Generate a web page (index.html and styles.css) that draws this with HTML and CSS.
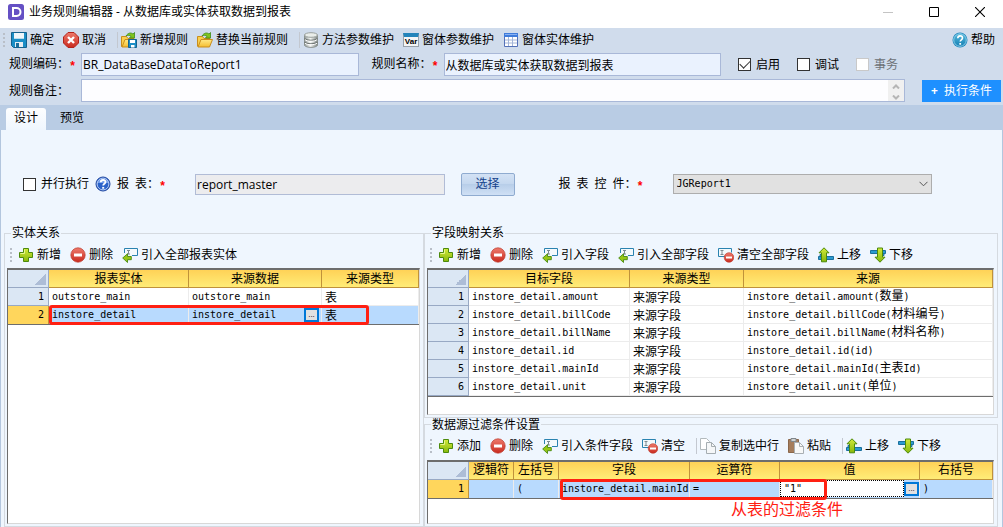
FILE: index.html
```html
<!DOCTYPE html>
<html lang="zh-CN">
<head>
<meta charset="utf-8">
<title>业务规则编辑器</title>
<link rel="stylesheet" href="styles.css">
</head>
<body>
<svg class="defs" width="0" height="0" aria-hidden="true">
  <defs>
    <linearGradient id="gGreen" x1="0" y1="0" x2="0" y2="1"><stop offset="0" stop-color="#d3ea3a"/><stop offset="1" stop-color="#86b80c"/></linearGradient>
    <linearGradient id="gRed" x1="0" y1="0" x2="0" y2="1"><stop offset="0" stop-color="#ee7a6c"/><stop offset="1" stop-color="#c92a1e"/></linearGradient>
    <linearGradient id="gFolder" x1="0" y1="0" x2="0" y2="1"><stop offset="0" stop-color="#ffe987"/><stop offset="1" stop-color="#f5bd2e"/></linearGradient>
    <linearGradient id="gSilver" x1="0" y1="0" x2="1" y2="0"><stop offset="0" stop-color="#8e9694"/><stop offset=".45" stop-color="#f6f8f6"/><stop offset="1" stop-color="#7c8482"/></linearGradient>
    <linearGradient id="gBlue" x1="0" y1="0" x2="0" y2="1"><stop offset="0" stop-color="#55b9dc"/><stop offset="1" stop-color="#1580b4"/></linearGradient>
  </defs>
  <symbol id="i-save" viewBox="0 0 16 16"><path d="M.5.5h15v15H2.500l-2-2z" fill="#1b8ec6" stroke="#14628f"/><path d="M3 1h10v6H3z" fill="#eef6fa"/><path d="M3 6h10v1H3z" fill="#b7dcee"/><path d="M4 10h8v5H4z" fill="#e8eef2"/><path d="M5 11h3v4H5z" fill="#1c6e9c"/></symbol>
  <symbol id="i-cancel" viewBox="0 0 16 16"><path d="M5 .5h6L15.500 5v6L11 15.500H5L.5 11V5z" fill="url(#gRed)" stroke="#b3231a"/><path d="M5 5l6 6M11 5l-6 6" stroke="#fff" stroke-width="2.400"/></symbol>
  <symbol id="i-folder" viewBox="0 0 16 16"><path d="M.5 14.500V4.500h5l1.500 2h6v3" fill="#f9cf4c" stroke="#c98d1c"/><path d="M1 15l3-7.500h11.500L12.500 15z" fill="url(#gFolder)" stroke="#c98d1c"/><path d="M5 4C7 .7 10 .3 12 2l1.500-1.500V6H8.500L10 4.300C8.500 3 7 3.200 5 4z" fill="#80c41f" stroke="#3d8b17" stroke-width=".8"/></symbol>
  <symbol id="i-foldersave" viewBox="0 0 16 16"><path d="M.5 14.500V4.500h5l1.500 2h6v8z" fill="#f9cf4c" stroke="#c98d1c"/><path d="M1 15l3-7.500h10V15z" fill="url(#gFolder)" stroke="#c98d1c"/><path d="M5 4C7 .7 10 .3 12 2l1.500-1.500V6H8.500L10 4.300C8.500 3 7 3.200 5 4z" fill="#80c41f" stroke="#3d8b17" stroke-width=".8"/><path d="M7.500 7.500h8v8h-8z" fill="#1b8ec6" stroke="#14628f"/><path d="M9 8h5v3H9zM10 13h3.500v2.500H10z" fill="#fff"/></symbol>
  <symbol id="i-db" viewBox="0 0 16 16"><path d="M1.500 3h13v10.500c-2 2.500-11 2.500-13 0z" fill="url(#gSilver)" stroke="#8b928f"/><ellipse cx="8" cy="3" rx="6.500" ry="2.300" fill="#e9edea" stroke="#9aa19e"/><path d="M1.500 6.500c2 2.300 11 2.300 13 0M1.500 10c2 2.300 11 2.300 13 0" fill="none" stroke="#6f7674" stroke-width="1.200"/><path d="M2 7.600c2 2.200 10 2.200 12 0M2 11.100c2 2.200 10 2.200 12 0" fill="none" stroke="#fff"/></symbol>
  <symbol id="i-table" viewBox="0 0 16 16"><path d="M1.500 1.500h13v13h-13z" fill="#fff" stroke="#5471b8"/><path d="M1 1h14v4H1z" fill="#3e7bdb"/><path d="M2 2h12v1H2z" fill="#88b1f2"/><path d="M5.500 5v9M9.500 5v9M2 8h12M2 11h12" stroke="#a3b5d8"/></symbol>
  <symbol id="i-help" viewBox="0 0 16 16"><circle cx="8" cy="8" r="7.500" fill="#1b86bd"/><circle cx="8" cy="8" r="6.300" fill="url(#gBlue)" stroke="#a4dcf0" stroke-width=".8"/><path d="M5.800 6.200C5.800 3 10.500 3.200 10.500 6c0 1.800-2.300 1.800-2.300 3.600" fill="none" stroke="#fff" stroke-width="1.600"/><path d="M7.300 11h1.800v1.700H7.300z" fill="#fff"/></symbol>
  <symbol id="i-helpblue" viewBox="0 0 16 16"><circle cx="8" cy="8" r="7" fill="#2b62c9" stroke="#1d449d"/><path d="M2.200 7a5.900 5 0 0 1 11.600 0z" fill="#6f9cec"/><circle cx="8" cy="8" r="5.900" fill="none" stroke="#b5cdf5"/><path d="M5.700 6.300C5.800 3.300 10.500 3.300 10.500 6c0 1.800-2.300 1.800-2.300 3.500" fill="none" stroke="#fff" stroke-width="1.800"/><path d="M7.200 10.900h2v1.800h-2z" fill="#fff"/></symbol>
  <symbol id="i-add" viewBox="0 0 16 16"><path d="M5.500 1.500h5v4h4v5h-4v4h-5v-4h-4v-5h4z" fill="url(#gGreen)" stroke="#4c8a0c"/><path d="M6.500 2.500v4h-4" fill="none" stroke="#e8f78e"/></symbol>
  <symbol id="i-del" viewBox="0 0 16 16"><circle cx="8" cy="8" r="7.200" fill="url(#gRed)" stroke="#bb3a2d" stroke-width=".7"/><path d="M4 6.500h8v3H4z" fill="#fff"/></symbol>
  <symbol id="i-import" viewBox="0 0 16 16"><path d="M2.500 6V1.500h13v7H10" fill="#f3f9fc" stroke="#2a83b0"/><path d="M5 3.500h3M6.500 3.500v3.500M5 7h3" stroke="#7d8b91"/><path d="M.7 11L5.500 6.800v2.700h3.800v3.200H5.500v2.800z" fill="#97c714" stroke="#4a8a12" stroke-width=".9"/></symbol>
  <symbol id="i-clear" viewBox="0 0 16 16"><path d="M7 9.500H.5v-8h13v4" fill="#f3f9fc" stroke="#2a83b0"/><path d="M2.500 3.500h3M4 3.500v4M2.500 7.500h3" stroke="#7d8b91"/><circle cx="11" cy="10.500" r="4.800" fill="url(#gRed)" stroke="#bb3a2d" stroke-width=".6"/><path d="M8 9.500h6v2H8z" fill="#fff"/></symbol>
  <symbol id="i-up" viewBox="0 0 16 16"><path d="M.5 9.500h15v3H.5zM2 7.500h4v2H2z" fill="#2b9bd0" stroke="#1a6f9d"/><path d="M6 .8l5 5H8.500v9h-5v-9H1z" fill="url(#gGreen)" stroke="#4c8a0c"/></symbol>
  <symbol id="i-down" viewBox="0 0 16 16"><path d="M.5 3.500h15v3H.5zM10 6.500h4v2h-4z" fill="#2b9bd0" stroke="#1a6f9d"/><path d="M10 15.200l-5-5h2.500V1h5v9.200H15z" fill="url(#gGreen)" stroke="#4c8a0c"/></symbol>
  <symbol id="i-copy" viewBox="0 0 16 16"><path d="M.5.5h6l3 3v8h-9z" fill="#fff" stroke="#b3babd"/><path d="M6.500 4.500h5l4 4v7h-9z" fill="#f5f7f8" stroke="#a5adb1"/><path d="M11.500 4.500v4h4" fill="none" stroke="#a5adb1"/></symbol>
  <symbol id="i-paste" viewBox="0 0 16 16"><path d="M.5 1.500h10v13H.5z" fill="#a57d5c" stroke="#8a674b"/><path d="M3 .5h5v3H3z" fill="#cfd3d5" stroke="#80868a"/><path d="M6.500 4.500h5l4 4v7h-9z" fill="#f7f8f8" stroke="#a8afb3"/><path d="M11.500 4.500v4h4" fill="none" stroke="#a8afb3"/></symbol>
</svg>

<header class="titlebar">
  <svg class="logo" viewBox="0 0 16 16" aria-hidden="true"><rect width="16" height="16" rx="2.500" fill="#6550c4"/><path d="M5 4h3.500a4 4 0 0 1 0 8H5z" fill="none" stroke="#fff" stroke-width="2"/></svg>
  <h1 class="title">业务规则编辑器 - 从数据库或实体获取数据到报表</h1>
  <div class="winbtns">
    <button class="winbtn" aria-label="最小化"><svg viewBox="0 0 10 10"><path d="M0 5.500h10" stroke="#c4c4c4"/></svg></button>
    <button class="winbtn" aria-label="最大化"><svg viewBox="0 0 10 10"><path d="M.5.5h9v9h-9z" fill="none" stroke="#000"/></svg></button>
    <button class="winbtn" aria-label="关闭"><svg viewBox="0 0 10 10"><path d="M0 0l10 10M10 0L0 10" stroke="#000" stroke-width="1.100"/></svg></button>
  </div>
</header>

<div class="top">
  <div class="toolbar main-toolbar">
    <span class="grip"></span>
    <button class="tool"><svg><use href="#i-save"/></svg>确定</button>
    <button class="tool"><svg><use href="#i-cancel"/></svg>取消</button>
    <span class="sep"></span>
    <button class="tool"><svg><use href="#i-foldersave"/></svg>新增规则</button>
    <button class="tool"><svg><use href="#i-folder"/></svg>替换当前规则</button>
    <span class="sep"></span>
    <button class="tool"><svg><use href="#i-db"/></svg>方法参数维护</button>
    <button class="tool"><span class="var-icon">Var</span>窗体参数维护</button>
    <button class="tool"><svg><use href="#i-table"/></svg>窗体实体维护</button>
    <button class="tool help"><svg><use href="#i-help"/></svg>帮助</button>
  </div>
  <div class="form-row">
    <label class="field-label" for="code">规则编码：<i class="req">*</i></label>
    <input class="text" id="code" value="BR_DataBaseDataToReport1">
    <label class="field-label second" for="name">规则名称：<i class="req">*</i></label>
    <input class="text" id="name" value="从数据库或实体获取数据到报表">
    <div class="checks">
      <label class="check"><input type="checkbox" checked>启用</label>
      <label class="check"><input type="checkbox">调试</label>
      <label class="check off"><input type="checkbox" disabled>事务</label>
    </div>
  </div>
  <div class="form-row">
    <label class="field-label" for="remark">规则备注：</label>
    <div class="remark">
      <textarea id="remark" rows="1"></textarea>
      <span class="spin"><svg viewBox="0 0 8 5"><path d="M1 4.500l3-3 3 3"/></svg><svg viewBox="0 0 8 5"><path d="M1 .5l3 3 3-3"/></svg></span>
    </div>
    <button class="cond"><span class="plus">+</span>执行条件</button>
  </div>
</div>

<nav class="tabs">
  <button class="tab active">设计</button>
  <button class="tab">预览</button>
</nav>

<main class="page">
  <div class="report-row">
    <label class="check"><input type="checkbox">并行执行</label>
    <svg class="tip"><use href="#i-helpblue"/></svg>
    <label class="report-label" for="report">报&ensp;表：<i class="req">*</i></label>
    <input class="text readonly" id="report" value="report_master" readonly>
    <button class="choose">选择</button>
    <label class="control-label" for="control">报&ensp;表&ensp;控&ensp;件：<i class="req">*</i></label>
    <div class="select-wrap">
      <select id="control"><option>JGReport1</option></select>
      <svg viewBox="0 0 9 6"><path d="M.5.8l4 4 4-4"/></svg>
    </div>
  </div>

  <div class="panels">
    <fieldset class="group entities">
      <legend>实体关系</legend>
      <div class="toolbar">
        <span class="grip"></span>
        <button class="tool"><svg><use href="#i-add"/></svg>新增</button>
        <button class="tool"><svg><use href="#i-del"/></svg>删除</button>
        <button class="tool"><svg><use href="#i-import"/></svg>引入全部报表实体</button>
      </div>
      <div class="grid">
        <table>
          <colgroup><col class="c-num"><col class="c-ent"><col class="c-src"><col></colgroup>
          <thead><tr><th class="corner"></th><th>报表实体</th><th>来源数据</th><th>来源类型</th></tr></thead>
          <tbody>
            <tr><td class="num">1</td><td>outstore_main</td><td>outstore_main</td><td class="cjk">表</td></tr>
            <tr class="sel"><td class="num">2</td><td>instore_detail</td><td><div class="edit">instore_detail<button class="more">...</button></div></td><td class="cjk">表</td></tr>
          </tbody>
        </table>
        <div class="mark mark-entity"></div>
      </div>
    </fieldset>

    <div class="right">
      <fieldset class="group mapping">
        <legend>字段映射关系</legend>
        <div class="toolbar">
          <span class="grip"></span>
          <button class="tool"><svg><use href="#i-add"/></svg>新增</button>
          <button class="tool"><svg><use href="#i-del"/></svg>删除</button>
          <button class="tool"><svg><use href="#i-import"/></svg>引入字段</button>
          <button class="tool"><svg><use href="#i-import"/></svg>引入全部字段</button>
          <button class="tool"><svg><use href="#i-clear"/></svg>清空全部字段</button>
          <button class="tool"><svg><use href="#i-up"/></svg>上移</button>
          <button class="tool"><svg><use href="#i-down"/></svg>下移</button>
        </div>
        <div class="grid">
          <table>
            <colgroup><col class="c-num"><col class="c-target"><col class="c-type"><col></colgroup>
            <thead><tr><th class="corner"></th><th>目标字段</th><th>来源类型</th><th>来源</th></tr></thead>
            <tbody>
              <tr><td class="num">1</td><td>instore_detail.amount</td><td class="cjk">来源字段</td><td>instore_detail.amount(<span class="cjk">数量</span>)</td></tr>
              <tr><td class="num">2</td><td>instore_detail.billCode</td><td class="cjk">来源字段</td><td>instore_detail.billCode(<span class="cjk">材料编号</span>)</td></tr>
              <tr><td class="num">3</td><td>instore_detail.billName</td><td class="cjk">来源字段</td><td>instore_detail.billName(<span class="cjk">材料名称</span>)</td></tr>
              <tr><td class="num">4</td><td>instore_detail.id</td><td class="cjk">来源字段</td><td>instore_detail.id(id)</td></tr>
              <tr><td class="num">5</td><td>instore_detail.mainId</td><td class="cjk">来源字段</td><td>instore_detail.mainId(<span class="cjk">主表</span>Id)</td></tr>
              <tr><td class="num">6</td><td>instore_detail.unit</td><td class="cjk">来源字段</td><td>instore_detail.unit(<span class="cjk">单位</span>)</td></tr>
            </tbody>
          </table>
        </div>
      </fieldset>

      <fieldset class="group filter">
        <legend>数据源过滤条件设置</legend>
        <div class="toolbar">
          <span class="grip"></span>
          <button class="tool"><svg><use href="#i-add"/></svg>添加</button>
          <button class="tool"><svg><use href="#i-del"/></svg>删除</button>
          <button class="tool"><svg><use href="#i-import"/></svg>引入条件字段</button>
          <button class="tool"><svg><use href="#i-clear"/></svg>清空</button>
          <span class="sep"></span>
          <button class="tool"><svg><use href="#i-copy"/></svg>复制选中行</button>
          <button class="tool"><svg><use href="#i-paste"/></svg>粘贴</button>
          <span class="sep"></span>
          <button class="tool"><svg><use href="#i-up"/></svg>上移</button>
          <button class="tool"><svg><use href="#i-down"/></svg>下移</button>
        </div>
        <div class="grid">
          <table>
            <colgroup><col class="c-num"><col class="c-brk"><col class="c-brk"><col class="c-field"><col class="c-op"><col class="c-val"><col></colgroup>
            <thead><tr><th class="corner"></th><th>逻辑符</th><th>左括号</th><th>字段</th><th>运算符</th><th>值</th><th>右括号</th></tr></thead>
            <tbody>
              <tr class="sel"><td class="num">1</td><td></td><td>(</td><td>instore_detail.mainId</td><td>=</td><td class="val"><div class="edit"><input class="cell-input" value='"1"' aria-label="值"><button class="more">...</button></div></td><td>)</td></tr>
            </tbody>
          </table>
          <div class="mark mark-filter"></div>
          <div class="note">从表的过滤条件</div>
        </div>
      </fieldset>
    </div>
  </div>
</main>
</body>
</html>
```
FILE: styles.css
```css
* { box-sizing: border-box; }

body {
  margin: 0;
  height: 100vh;
  display: flex;
  flex-direction: column;
  overflow: hidden;
  background: #d0dcec;
  color: #000;
  font: 12px/16px "Open Sans", "Noto Sans CJK SC", sans-serif;
}

button, input, textarea, select {
  font: inherit;
  color: inherit;
  margin: 0;
}

button { border: 0; padding: 0; background: none; white-space: nowrap; }

.defs { position: absolute; }

/* title bar */
.titlebar {
  display: flex;
  align-items: center;
  height: 28px;
  padding: 0 18px 4px 8px;
  background: #fff;
}
.logo { width: 16px; height: 16px; }
.title { margin: 0 0 0 5px; font-size: 12px; font-weight: 400; }
.winbtns { display: flex; gap: 36px; margin-left: auto; }
.winbtn { width: 10px; height: 10px; }
.winbtn svg { display: block; width: 10px; height: 10px; }

/* toolbars */
.toolbar { display: flex; align-items: center; height: 24px; padding-left: 3px; }
.main-toolbar { padding: 0 8px 0 3px; }
.grip {
  width: 2px;
  height: 14px;
  margin-right: 6px;
  background: repeating-linear-gradient(#b9bfc8 0 2px, transparent 2px 4px);
}
.tool { display: flex; align-items: center; gap: 3px; line-height: 16px; }
.tool + .tool { margin-left: 9px; }
.tool svg, .tip { width: 16px; height: 16px; flex: none; }
.tool.help { margin-left: auto; }
.sep { width: 1px; height: 16px; margin: 0 3px 0 11px; background: #fff; border-left: 1px solid #c3c8d0; }
.var-icon {
  width: 16px;
  height: 14px;
  border: 1px solid #98a2ac;
  border-top: 4px solid #2384bb;
  background: #f4f5f6;
  font: bold 8px/9px "Liberation Sans", sans-serif;
}

/* rule form */
.form-row { display: flex; align-items: center; margin: 0 2px 3px 9px; }
.main-toolbar + .form-row { margin-top: 1px; }
.field-label { width: 72px; flex: none; white-space: nowrap; }
.field-label.second { margin-left: 13px; }
.req { color: #f00; font: bold 12px/12px "Liberation Mono", monospace; vertical-align: -2px; }
.text {
  flex: 1;
  min-width: 0;
  height: 23px;
  padding: 0 1px;
  border: 1px solid #a9b8d8;
  background: #eaf2fe;
}
.checks { display: flex; gap: 17px; width: 280px; padding-left: 17px; }
.check { display: flex; align-items: center; gap: 5px; white-space: nowrap; }
.check input {
  appearance: none;
  width: 13px;
  height: 13px;
  border: 1px solid #333;
  background: #fff;
  display: grid;
  place-items: center;
}
.check input:checked::after {
  content: "";
  width: 9px;
  height: 5px;
  margin-bottom: 3px;
  border: solid #333;
  border-width: 0 0 1px 1px;
  transform: rotate(-45deg);
}
.check.off { color: #6d7177; }
.check.off input { border-color: #c9c9c9; }
.remark {
  flex: 1;
  display: flex;
  height: 23px;
  border: 1px solid #a9b8d8;
  background: #fdfdff;
}
.remark textarea { flex: 1; border: 0; padding: 2px; resize: none; background: none; overflow: hidden; }
.spin { display: flex; flex-direction: column; justify-content: space-between; align-items: center; width: 16px; padding: 4px 0 1px; background: #f0f0f0; }
.spin svg { width: 8px; height: 5px; }
.spin path { fill: none; stroke: #b5b5b5; stroke-width: 2; }
.cond { width: 79px; height: 22px; margin-left: 17px; background: #1e90ff; color: #fff; }
.plus { margin-right: 6px; font-weight: 700; }

/* tabs */
.tabs { display: flex; height: 25px; padding: 3px 6px 0; background: #b9cce4; }
.tab { width: 40px; height: 22px; padding-bottom: 2px; }
.tab + .tab { margin-left: 6px; }
.tab.active { background: linear-gradient(#fdfeff, #eff6fe); border-radius: 3px 3px 0 0; }

/* design page */
.page {
  flex: 1;
  min-height: 0;
  display: flex;
  flex-direction: column;
  background: #eff6fe;
  border: solid #b3c6de;
  border-width: 0 1px;
}
.report-row { display: flex; align-items: center; margin: 42px 70px 30px 22px; height: 24px; }
.tip { margin: 0 6px; }
.report-label { width: 78px; flex: none; }
.report-row .text.readonly { flex: 247 1 0; height: 21px; background: #ececee; border-color: #b1bcd6; }
.choose {
  width: 54px;
  height: 23px;
  margin-left: 16px;
  border: 1px solid #8fabd0;
  border-radius: 2px;
  background: linear-gradient(#d3e2f5, #c5d8ef 45%, #b8cee9 50%, #cfe0f5);
  color: #15428b;
}
.control-label { width: 114px; margin-left: 44px; flex: none; }
.select-wrap { position: relative; flex: 261 1 0; min-width: 0; }
.select-wrap select {
  display: block;
  appearance: none;
  width: 100%;
  height: 20px;
  padding: 0 3px;
  border: 1px solid #adadad;
  border-radius: 0;
  background: #e1e1e1;
  font: 10px/16px "DejaVu Sans Mono", monospace;
}
.select-wrap svg { position: absolute; right: 4px; top: 7px; width: 9px; height: 6px; }
.select-wrap path { fill: none; stroke: #555; }

/* group boxes */
.panels { flex: 1; min-height: 0; display: grid; grid-template-columns: 420fr 574fr; padding: 0 4px 0 3px; }
.right { display: flex; flex-direction: column; min-width: 0; min-height: 0; }
.group {
  display: flex;
  flex-direction: column;
  min-width: 0;
  min-height: 0;
  margin: 0;
  padding: 1px 3px 2px 2px;
  border: 1px solid #d5dae0;
}
.group legend { margin-left: 4px; padding: 0 1px; line-height: 14px; }
.group .toolbar { height: 27px; }
.mapping { flex: 193 1 0; }
.filter { flex: 108 1 0; }

/* grids */
.grid {
  position: relative;
  flex: 1;
  min-height: 0;
  border: 1px solid #d8d8d8;
  border-top: 2px solid #6d6d6d;
  border-left-color: #6d6d6d;
  background: #fff;
}
table { width: 100%; table-layout: fixed; border-collapse: separate; border-spacing: 0; border-bottom: 1px solid #6d6d6d; }
th {
  height: 18px;
  padding: 0;
  border: solid #c0923a;
  border-width: 0 1px 1px 0;
  background: linear-gradient(#ffd257, #ffec77);
  font-weight: 400;
  line-height: 16px;
}
td {
  height: 18px;
  padding: 0 2px 0 3px;
  border: solid #ececec;
  border-width: 0 1px 1px 0;
  font: 10px/16px "DejaVu Sans Mono", monospace;
  white-space: nowrap;
}
.cjk { font: 12px/16px "Noto Sans CJK SC", sans-serif; }
span.cjk { line-height: 12px; }
.corner {
  border-color: #98a9c4;
  background: linear-gradient(135deg, transparent 50%, #adbdd6 50%) right 2px bottom 2px / 11px 11px no-repeat, #dbe7f4;
}
.num {
  padding-right: 4px;
  text-align: right;
  background: #dbe7f4;
  border-color: #98a9c4;
}
.sel td { background: #b8dafe; border-bottom: 0; }
.sel .num { background: #ffd65c; border-color: #c0923a; }
.c-num { width: 41px; }
.c-ent { width: 140px; }
.c-src { width: 133px; }
.c-target { width: 161px; }
.c-type { width: 114px; }
.c-brk { width: 45px; }
.c-field { width: 131px; }
.c-op { width: 90px; }
.c-val { width: 140px; }
.edit { display: flex; align-items: center; }
.sel .val { padding: 0; }
.cell-input {
  flex: 1;
  min-width: 0;
  height: 17px;
  padding: 0 3px;
  border: 1px dotted #000;
  background: #fff;
}
.more {
  width: 15px;
  height: 14px;
  margin-left: auto;
  border: 2px solid #0078d7;
  background: #e1e1e1;
  font: 8px/8px "Liberation Sans", sans-serif;
}

/* annotations over the grids */
.mark { position: absolute; border: 3px solid #ff2012; border-radius: 3px; }
.mark-entity { left: 41px; top: 35px; width: 320px; height: 20px; }
.mark-filter { left: 132px; top: 17px; width: 267px; height: 21px; }
.note { position: absolute; left: 303px; top: 37px; color: #ff2012; font-size: 16px; line-height: 20px; }
```
